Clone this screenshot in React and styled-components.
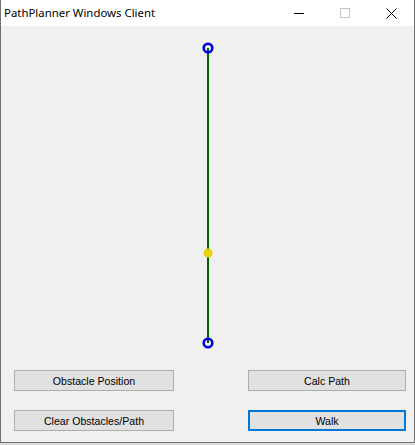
import React from "react";
import styled, { createGlobalStyle } from "styled-components";

const Global = createGlobalStyle`
  html, body {
    margin: 0;
    padding: 0;
    background: #dcdcdc;
    overflow: hidden;
  }
`;

const Window = styled.div`
  width: 413px;
  height: 442px;
  border: 1px solid #707070;
  border-top: none;
  background: #f0f0f0;
  display: flex;
  flex-direction: column;
`;

const TitleBar = styled.div`
  height: 26px;
  background: #ffffff;
  display: flex;
  align-items: center;
  flex: none;
`;

const Title = styled.div`
  flex: 1;
  padding-left: 3px;
  font-family: "Noto Sans", "Open Sans", sans-serif;
  font-size: 11.4px;
  color: #000;
  line-height: 26px;
`;

const Control = styled.div`
  width: 46px;
  height: 26px;
  display: flex;
  align-items: center;
  justify-content: center;
`;

const Canvas = styled.svg`
  display: block;
  flex: none;
  width: 413px;
  height: 344px;
`;

const ButtonGrid = styled.div`
  display: grid;
  grid-template-columns: 160px 158px;
  grid-template-rows: 21px 21px;
  column-gap: 74px;
  row-gap: 19px;
  padding-left: 13px;
`;

const Button = styled.button`
  box-sizing: border-box;
  margin: 0;
  padding: 0;
  height: 21px;
  background: #e1e1e1;
  border: ${(p) => (p.$focused ? "2px solid #0078d7" : "1px solid #adadad")};
  font-family: "Liberation Sans", Arial, sans-serif;
  font-size: 10.6px;
  color: #000;
  cursor: default;
`;

export default function App() {
  return (
    <>
      <Global />
      <Window>
        <TitleBar>
          <Title>PathPlanner Windows Client</Title>
          <Control>
            <svg width="10" height="10" viewBox="0 0 10 10">
              <line x1="0" y1="5.5" x2="10" y2="5.5" stroke="#000" strokeWidth="1" />
            </svg>
          </Control>
          <Control>
            <svg width="10" height="10" viewBox="0 0 10 10">
              <rect x="0.5" y="0.5" width="9" height="9" fill="none" stroke="#c4c4c4" strokeWidth="1" />
            </svg>
          </Control>
          <Control>
            <svg width="11" height="11" viewBox="0 0 11 11">
              <path d="M0.5 0.5 L10.5 10.5 M10.5 0.5 L0.5 10.5" stroke="#000" strokeWidth="1" />
            </svg>
          </Control>
        </TitleBar>
        <Canvas viewBox="0 0 413 344">
          <line x1="207" y1="22" x2="207" y2="317" stroke="#006400" strokeWidth="2" />
          <circle cx="207" cy="227" r="4.5" fill="#e6d200" />
          <circle cx="207" cy="22" r="4.3" fill="none" stroke="#0000e0" strokeWidth="2.6" />
          <circle cx="207" cy="317" r="4.3" fill="none" stroke="#0000e0" strokeWidth="2.6" />
        </Canvas>
        <ButtonGrid>
          <Button>Obstacle Position</Button>
          <Button>Calc Path</Button>
          <Button>Clear Obstacles/Path</Button>
          <Button $focused>Walk</Button>
        </ButtonGrid>
      </Window>
    </>
  );
}
